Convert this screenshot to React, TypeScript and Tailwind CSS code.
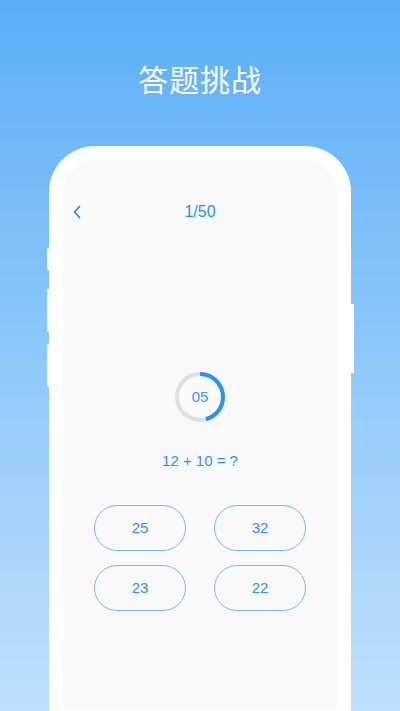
import React from "react";

const answers = ["25", "32", "23", "22"];

/** Countdown ring — gray track with a blue arc starting at 12 o'clock. */
function Ring({ value, progress }: { value: string; progress: number }) {
  const r = 23;
  const c = 2 * Math.PI * r;
  return (
    <div className="relative h-[50px] w-[50px]">
      <svg width="50" height="50" viewBox="0 0 50 50" className="-rotate-90">
        <circle cx="25" cy="25" r={r} fill="none" stroke="#dfdfdf" strokeWidth="4" />
        <circle
          cx="25"
          cy="25"
          r={r}
          fill="none"
          stroke="#2b93ef"
          strokeWidth="4"
          strokeDasharray={`${c * progress} ${c}`}
        />
      </svg>
      <span className="absolute inset-0 flex items-center justify-center text-[15px] text-[#3a9af0]">
        {value}
      </span>
    </div>
  );
}

export default function App() {
  return (
    <div
      className="flex h-[711px] w-full flex-col items-center overflow-hidden bg-gradient-to-b from-[#5aaef6] to-[#bfe0fc]"
      style={{ fontFamily: '"Liberation Sans", "Noto Sans CJK SC", sans-serif' }}
    >
      <h1
        className="pt-[60px] text-[30px] leading-[36px] tracking-[1px] text-white"
        style={{ fontFamily: '"Noto Sans CJK SC", sans-serif' }}
      >
        答题挑战
      </h1>

      {/* phone frame */}
      <div className="relative mt-[50px] flex w-[302px] flex-1 flex-col rounded-t-[46px] bg-white px-[14px] pb-[2px] pt-[14px]">
        {/* side keys */}
        <span className="absolute left-[-2.5px] top-[102px] h-[22px] w-[3px] rounded-l-[1px] bg-white" />
        <span className="absolute left-[-2.5px] top-[143px] h-[43px] w-[3px] rounded-l-[1px] bg-white" />
        <span className="absolute left-[-2.5px] top-[198px] h-[43px] w-[3px] rounded-l-[1px] bg-white" />
        <span className="absolute right-[-3px] top-[158px] h-[69px] w-[3px] rounded-r-[1px] bg-white" />

        {/* screen */}
        <div className="flex flex-1 flex-col items-center rounded-t-[32px] bg-[#f9f9f9]">
          <div className="relative mt-[40px] flex h-[24px] w-full items-center justify-center">
            <svg
              className="absolute left-[9px] top-[5px]"
              width="10"
              height="14"
              viewBox="0 0 10 14"
              fill="none"
              stroke="#2b8fea"
              strokeWidth="1.8"
              strokeLinecap="round"
              strokeLinejoin="round"
            >
              <path d="M7.5 1.5 L2.5 7 L7.5 12.5" />
            </svg>
            <span className="text-[16px] text-[#2b8fea]">1/50</span>
          </div>

          <div className="mt-[148px]">
            <Ring value="05" progress={0.455} />
          </div>

          <p className="mt-[29px] text-[15px] leading-[20px] text-[#2b93ef]">12 + 10 = ?</p>

          <div className="mt-[34px] grid grid-cols-[92px_92px] gap-x-[28px] gap-y-[14px]">
            {answers.map((a) => (
              <button
                key={a}
                className="flex h-[46px] items-center justify-center rounded-full border border-[#71b8f5] text-[15px] text-[#2b93ef]"
              >
                {a}
              </button>
            ))}
          </div>
        </div>
      </div>
    </div>
  );
}
